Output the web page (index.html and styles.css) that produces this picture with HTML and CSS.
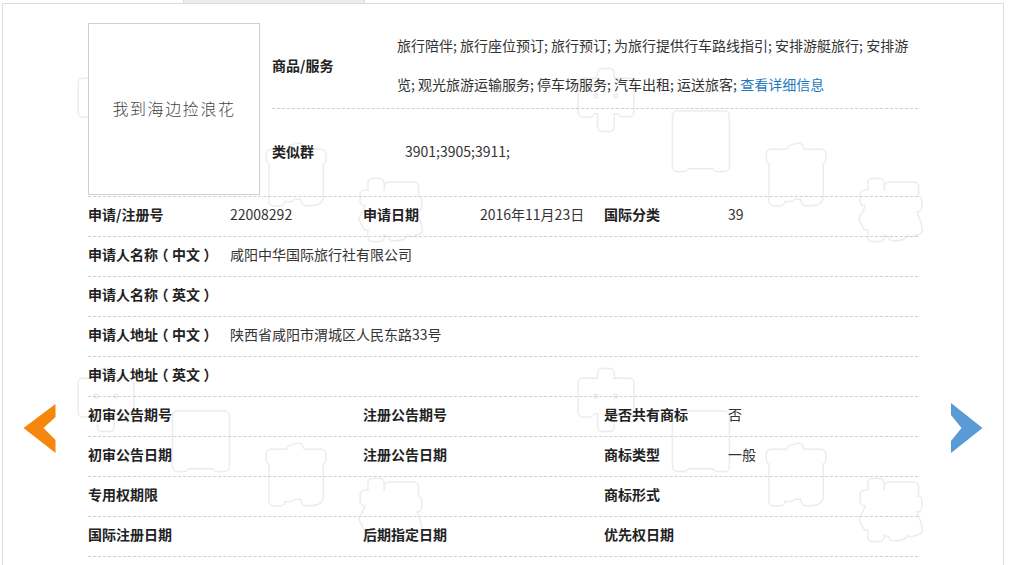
FILE: index.html
```html
<!DOCTYPE html>
<html lang="zh-CN">
<head>
<meta charset="utf-8">
<title>商标详情</title>
<link rel="stylesheet" href="styles.css">
</head>
<body>
<div class="page">
  <svg class="watermark" width="1011" height="565" viewBox="0 0 1011 565" aria-hidden="true">
    <g class="wm-under">
      <text x="78" y="121">中</text><text x="173" y="161">国</text><text x="268" y="196">商</text><text x="363" y="231">标</text>
      <text x="578" y="121">中</text><text x="673" y="161">国</text><text x="768" y="196">商</text><text x="863" y="231">标</text>
      <text x="78" y="421">中</text><text x="173" y="461">国</text><text x="268" y="496">商</text><text x="363" y="531">标</text>
      <text x="578" y="421">中</text><text x="673" y="461">国</text><text x="768" y="496">商</text><text x="863" y="531">标</text>
    </g>
    <g class="wm-over">
      <text x="78" y="121">中</text><text x="173" y="161">国</text><text x="268" y="196">商</text><text x="363" y="231">标</text>
      <text x="578" y="121">中</text><text x="673" y="161">国</text><text x="768" y="196">商</text><text x="863" y="231">标</text>
      <text x="78" y="421">中</text><text x="173" y="461">国</text><text x="268" y="496">商</text><text x="363" y="531">标</text>
      <text x="578" y="421">中</text><text x="673" y="461">国</text><text x="768" y="496">商</text><text x="863" y="531">标</text>
    </g>
  </svg>

  <div class="tabs"><span class="tab"></span></div>

  <div class="frame">
    <div class="top">
      <div class="logo"><span>我到海边捡浪花</span></div>
      <div class="summary">
        <div class="srow goods">
          <div class="slabel">商品/服务</div>
          <div class="svalue goods-text">旅行陪伴; 旅行座位预订; 旅行预订; 为旅行提供行车路线指引; 安排游艇旅行; 安排游览; 观光旅游运输服务; 停车场服务; 汽车出租; 运送旅客; <a class="more" href="#">查看详细信息</a></div>
        </div>
        <div class="srow similar">
          <div class="slabel">类似群</div>
          <div class="svalue group">3901;3905;3911;</div>
        </div>
      </div>
    </div>

    <div class="rows">
      <div class="row">
        <span class="k">申请/注册号</span><span class="v">22008292</span>
        <span class="k">申请日期</span><span class="v">2016年11月23日</span>
        <span class="k">国际分类</span><span class="v">39</span>
      </div>
      <div class="row">
        <span class="k">申请人名称<span class="paren">（</span>中文<span class="paren">）</span></span><span class="v wide">咸阳中华国际旅行社有限公司</span>
      </div>
      <div class="row">
        <span class="k">申请人名称<span class="paren">（</span>英文<span class="paren">）</span></span><span class="v wide"></span>
      </div>
      <div class="row">
        <span class="k">申请人地址<span class="paren">（</span>中文<span class="paren">）</span></span><span class="v wide">陕西省咸阳市渭城区人民东路33号</span>
      </div>
      <div class="row">
        <span class="k">申请人地址<span class="paren">（</span>英文<span class="paren">）</span></span><span class="v wide"></span>
      </div>
      <div class="row">
        <span class="k">初审公告期号</span><span class="v"></span>
        <span class="k">注册公告期号</span><span class="v"></span>
        <span class="k">是否共有商标</span><span class="v">否</span>
      </div>
      <div class="row">
        <span class="k">初审公告日期</span><span class="v"></span>
        <span class="k">注册公告日期</span><span class="v"></span>
        <span class="k">商标类型</span><span class="v">一般</span>
      </div>
      <div class="row">
        <span class="k">专用权期限</span><span class="v"></span>
        <span class="k"></span><span class="v"></span>
        <span class="k">商标形式</span><span class="v"></span>
      </div>
      <div class="row">
        <span class="k">国际注册日期</span><span class="v"></span>
        <span class="k">后期指定日期</span><span class="v"></span>
        <span class="k">优先权日期</span><span class="v"></span>
      </div>
    </div>
  </div>

  <a class="arrow prev" href="#" aria-label="上一个">
    <svg width="34" height="50" viewBox="0 0 34 50"><polygon points="0.5,24 32.5,0 32.5,13 20.5,24 32.5,36 32.5,49" fill="#f5870c"/></svg>
  </a>
  <a class="arrow next" href="#" aria-label="下一个">
    <svg width="34" height="52" viewBox="0 0 34 52"><polygon points="0,0 31.5,25 0,50 0,38 10.5,25 0,12" fill="#5b9bd5"/></svg>
  </a>
</div>
</body>
</html>
```

FILE: styles.css
```css
html, body {
  margin: 0;
  padding: 0;
  background: #fff;
}

body {
  font-family: "Noto Sans CJK SC", "Microsoft YaHei", "Liberation Sans", sans-serif;
  font-size: 14px;
  color: #333;
}

.page {
  position: relative;
  width: 1011px;
  height: 565px;
  overflow: hidden;
}

.watermark {
  position: absolute;
  left: 0;
  top: 0;
  z-index: 0;
}

.watermark text {
  font-family: "Noto Sans CJK SC", sans-serif;
  font-size: 56px;
  font-weight: 700;
  stroke-linejoin: round;
  stroke-linecap: round;
}

.wm-under text {
  fill: #ececec;
  stroke: #ececec;
  stroke-width: 11px;
}

.wm-over text {
  fill: #fff;
  stroke: #fff;
  stroke-width: 8px;
}

.tabs {
  position: relative;
  z-index: 1;
  height: 3px;
  padding-left: 183px;
}

.tab {
  display: block;
  width: 180px;
  height: 3px;
  background: #ececec;
  border-left: 1px solid #dedede;
  border-right: 1px solid #dedede;
}

.frame {
  position: relative;
  z-index: 1;
  margin-left: 2px;
  width: 1002px;
  height: 600px;
  border: 1px solid #dcdcdc;
  border-bottom: none;
  padding: 19px 0 0 85px;
  box-sizing: border-box;
}

.top {
  display: flex;
  width: 830px;
  padding-bottom: 1px;
  border-bottom: 1px dashed #cfcfcf;
}

.logo {
  width: 172px;
  height: 172px;
  box-sizing: border-box;
  border: 1px solid #cfcfcf;
  background: #fff;
  display: flex;
  align-items: center;
  justify-content: center;
}

.logo span {
  font-size: 16px;
  font-weight: 300;
  letter-spacing: 1.6px;
  color: #444;
  margin-top: -2px;
}

.summary {
  flex: 1;
  margin-left: 12px;
  display: flex;
  flex-direction: column;
}

.srow {
  display: flex;
  align-items: center;
  height: 86px;
  padding-bottom: 2px;
  box-sizing: border-box;
}

.srow.goods {
  border-bottom: 1px dashed #cfcfcf;
}

.slabel {
  width: 125px;
  flex: none;
  font-weight: bold;
  color: #222;
}

.svalue {
  color: #333;
}

.goods-text {
  width: 516px;
  line-height: 39px;
}

.group {
  padding-left: 8px;
}

.more {
  color: #1f78be;
  text-decoration: none;
}

.rows {
  width: 830px;
}

.row {
  display: grid;
  grid-template-columns: 142px 133px 117px 124px 124px 1fr;
  align-items: center;
  height: 40px;
  padding-bottom: 5px;
  box-sizing: border-box;
  border-bottom: 1px dashed #cfcfcf;
}

.k {
  font-weight: bold;
  color: #222;
  white-space: nowrap;
}

.paren {
  display: inline-block;
  width: 14px;
  text-align: center;
  font-feature-settings: "halt";
}

.v {
  color: #333;
  white-space: nowrap;
}

.v.wide {
  grid-column: 2 / -1;
}

.arrow {
  position: absolute;
  z-index: 2;
  display: block;
  line-height: 0;
}

.arrow.prev {
  left: 23px;
  top: 404px;
}

.arrow.next {
  left: 951px;
  top: 403px;
}
```
